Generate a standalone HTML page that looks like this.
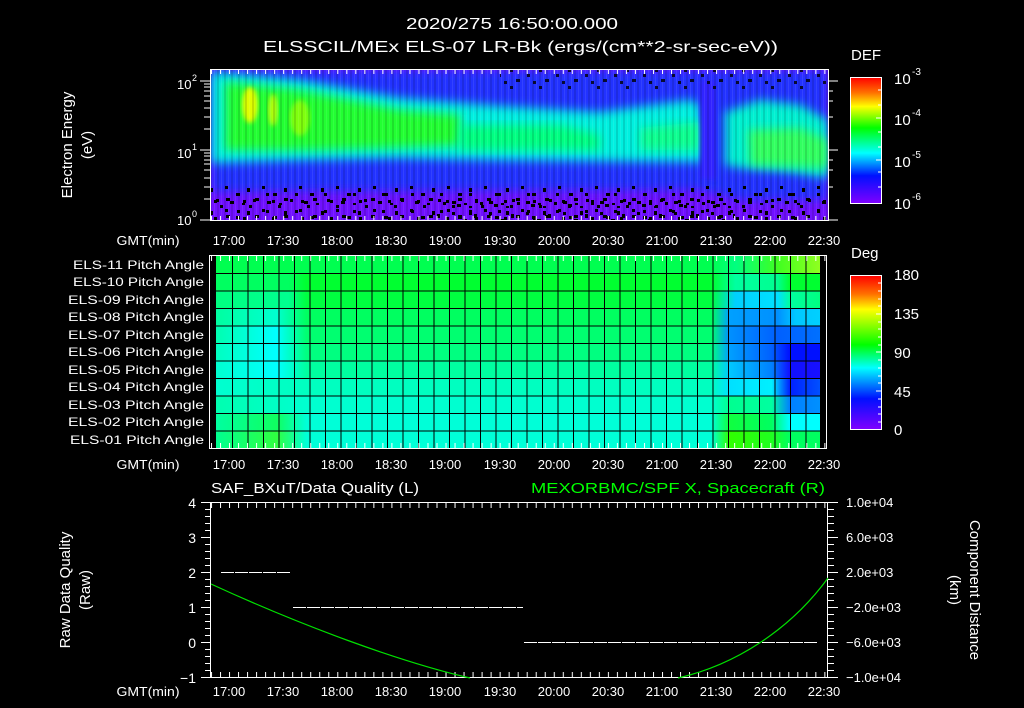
<!DOCTYPE html>
<html><head><meta charset="utf-8"><style>
html,body{margin:0;padding:0;background:#000;width:1024px;height:708px;overflow:hidden}
svg{display:block}
text{font-family:"Liberation Sans",sans-serif;fill:#fff}
</style></head><body>
<svg width="1024" height="708" viewBox="0 0 1024 708" xmlns="http://www.w3.org/2000/svg">
<defs>
<clipPath id="c1"><rect x="211" y="70" width="617" height="150"/></clipPath>
<filter id="b6" x="-20%" y="-20%" width="140%" height="140%"><feGaussianBlur stdDeviation="5"/></filter>
<filter id="b3"><feGaussianBlur stdDeviation="2.5"/></filter>
<pattern id="spk1" width="37" height="23" patternUnits="userSpaceOnUse">
<rect x="3" y="2" width="3" height="3" fill="#000"/><rect x="14" y="9" width="4" height="3" fill="#000"/><rect x="25" y="4" width="3" height="4" fill="#000"/><rect x="31" y="15" width="3" height="3" fill="#000"/><rect x="8" y="17" width="4" height="3" fill="#000"/><rect x="20" y="19" width="3" height="2" fill="#000"/>
</pattern>
<pattern id="spk2" width="29" height="17" patternUnits="userSpaceOnUse">
<rect x="5" y="6" width="3" height="3" fill="#000"/><rect x="17" y="1" width="3" height="3" fill="#000"/><rect x="23" y="11" width="4" height="3" fill="#000"/><rect x="11" y="13" width="3" height="3" fill="#000"/>
</pattern>
<pattern id="streak" width="7" height="10" patternUnits="userSpaceOnUse">
<rect x="0" y="0" width="2" height="10" fill="#000" opacity="0.12"/><rect x="4" y="0" width="1" height="10" fill="#fff" opacity="0.08"/>
</pattern>
<pattern id="tk" x="211" width="9.02" height="10" patternUnits="userSpaceOnUse"><rect x="0" y="0" width="1" height="10" fill="#fff"/></pattern>
<linearGradient id="gdef" x1="0" y1="0" x2="0" y2="1">
<stop offset="0" stop-color="#ff0000"/><stop offset="0.12" stop-color="#ff7000"/><stop offset="0.23" stop-color="#ffff00"/><stop offset="0.4" stop-color="#00ff00"/><stop offset="0.6" stop-color="#00ffff"/><stop offset="0.78" stop-color="#0010ff"/><stop offset="1" stop-color="#8000ff"/></linearGradient>
<linearGradient id="gdeg" x1="0" y1="0" x2="0" y2="1">
<stop offset="0" stop-color="#ff0000"/><stop offset="0.12" stop-color="#ff7000"/><stop offset="0.22" stop-color="#ffff00"/><stop offset="0.45" stop-color="#00ff00"/><stop offset="0.6" stop-color="#00ffff"/><stop offset="0.8" stop-color="#0010ff"/><stop offset="1" stop-color="#8000ff"/></linearGradient>
<linearGradient id="r1" gradientUnits="userSpaceOnUse" x1="216" x2="820" y1="0" y2="0"><stop offset="0" stop-color="#00ff50"/><stop offset="0.82" stop-color="#00ff50"/><stop offset="0.86" stop-color="#00ff80"/><stop offset="0.93" stop-color="#40ff20"/><stop offset="1" stop-color="#90ff20"/></linearGradient>
<linearGradient id="r2" gradientUnits="userSpaceOnUse" x1="216" x2="820" y1="0" y2="0"><stop offset="0" stop-color="#00ff60"/><stop offset="0.12" stop-color="#00ff60"/><stop offset="0.15" stop-color="#00ff30"/><stop offset="0.82" stop-color="#00ff30"/><stop offset="0.86" stop-color="#00ffa0"/><stop offset="0.93" stop-color="#00ff90"/><stop offset="0.95" stop-color="#00ff30"/><stop offset="1" stop-color="#00ff30"/></linearGradient>
<linearGradient id="r3" gradientUnits="userSpaceOnUse" x1="216" x2="820" y1="0" y2="0"><stop offset="0" stop-color="#00ff80"/><stop offset="0.12" stop-color="#00ff90"/><stop offset="0.15" stop-color="#00ff40"/><stop offset="0.82" stop-color="#00ff40"/><stop offset="0.86" stop-color="#00d0ff"/><stop offset="0.93" stop-color="#00e0ff"/><stop offset="0.95" stop-color="#00ffa0"/><stop offset="1" stop-color="#00ff80"/></linearGradient>
<linearGradient id="r4" gradientUnits="userSpaceOnUse" x1="216" x2="820" y1="0" y2="0"><stop offset="0" stop-color="#00ffa0"/><stop offset="0.1" stop-color="#00ffd0"/><stop offset="0.15" stop-color="#00ff60"/><stop offset="0.82" stop-color="#00ff60"/><stop offset="0.85" stop-color="#00a0ff"/><stop offset="0.93" stop-color="#0090ff"/><stop offset="0.96" stop-color="#00c8ff"/><stop offset="1" stop-color="#00d0ff"/></linearGradient>
<linearGradient id="r5" gradientUnits="userSpaceOnUse" x1="216" x2="820" y1="0" y2="0"><stop offset="0" stop-color="#00ffb0"/><stop offset="0.1" stop-color="#00ffff"/><stop offset="0.15" stop-color="#00ff70"/><stop offset="0.82" stop-color="#00ff70"/><stop offset="0.85" stop-color="#0090ff"/><stop offset="0.93" stop-color="#0060ff"/><stop offset="1" stop-color="#0070ff"/></linearGradient>
<linearGradient id="r6" gradientUnits="userSpaceOnUse" x1="216" x2="820" y1="0" y2="0"><stop offset="0" stop-color="#00ffc0"/><stop offset="0.1" stop-color="#00ffff"/><stop offset="0.15" stop-color="#00ff80"/><stop offset="0.82" stop-color="#00ff80"/><stop offset="0.85" stop-color="#00a0ff"/><stop offset="0.92" stop-color="#0060ff"/><stop offset="0.95" stop-color="#0010ff"/><stop offset="1" stop-color="#0010ff"/></linearGradient>
<linearGradient id="r7" gradientUnits="userSpaceOnUse" x1="216" x2="820" y1="0" y2="0"><stop offset="0" stop-color="#00ffd0"/><stop offset="0.1" stop-color="#00ffff"/><stop offset="0.15" stop-color="#00ffa0"/><stop offset="0.82" stop-color="#00ffa0"/><stop offset="0.85" stop-color="#00c8ff"/><stop offset="0.92" stop-color="#0080ff"/><stop offset="0.95" stop-color="#1010ff"/><stop offset="1" stop-color="#1810ff"/></linearGradient>
<linearGradient id="r8" gradientUnits="userSpaceOnUse" x1="216" x2="820" y1="0" y2="0"><stop offset="0" stop-color="#00ffd0"/><stop offset="0.15" stop-color="#00ffc0"/><stop offset="0.82" stop-color="#00ffc0"/><stop offset="0.85" stop-color="#00e0ff"/><stop offset="0.92" stop-color="#00f0ff"/><stop offset="0.95" stop-color="#0020ff"/><stop offset="1" stop-color="#0050ff"/></linearGradient>
<linearGradient id="r9" gradientUnits="userSpaceOnUse" x1="216" x2="820" y1="0" y2="0"><stop offset="0" stop-color="#00ffb0"/><stop offset="0.15" stop-color="#00ffd0"/><stop offset="0.82" stop-color="#00ffd0"/><stop offset="0.85" stop-color="#00ff90"/><stop offset="0.92" stop-color="#00ffa0"/><stop offset="0.95" stop-color="#0080ff"/><stop offset="1" stop-color="#0090ff"/></linearGradient>
<linearGradient id="r10" gradientUnits="userSpaceOnUse" x1="216" x2="820" y1="0" y2="0"><stop offset="0" stop-color="#00ffa0"/><stop offset="0.1" stop-color="#10ff60"/><stop offset="0.15" stop-color="#00ffd8"/><stop offset="0.82" stop-color="#00ffd8"/><stop offset="0.85" stop-color="#10ff40"/><stop offset="0.92" stop-color="#00ff60"/><stop offset="0.95" stop-color="#00ffff"/><stop offset="1" stop-color="#00ffff"/></linearGradient>
<linearGradient id="r11" gradientUnits="userSpaceOnUse" x1="216" x2="820" y1="0" y2="0"><stop offset="0" stop-color="#00ff90"/><stop offset="0.1" stop-color="#30ff40"/><stop offset="0.15" stop-color="#00ffd8"/><stop offset="0.82" stop-color="#00ffd8"/><stop offset="0.85" stop-color="#30ff00"/><stop offset="0.92" stop-color="#20ff20"/><stop offset="0.95" stop-color="#00ff60"/><stop offset="1" stop-color="#00ff60"/></linearGradient>
</defs>

<text x="512" y="29" font-size="16" text-anchor="middle" textLength="212" lengthAdjust="spacingAndGlyphs">2020/275 16:50:00.000</text>
<text x="263" y="52" font-size="16" textLength="515" lengthAdjust="spacingAndGlyphs">ELSSCIL/MEx ELS-07 LR-Bk  (ergs/(cm**2-sr-sec-eV))</text>

<g clip-path="url(#c1)">
<rect x="211" y="70" width="617" height="150" fill="#7010ff"/>
<path d="M211,70 H828 V200 H740 L720,195 L700,190 L211,192 Z" fill="#2030ff" filter="url(#b6)"/>
<path d="M211,72 L300,80 L400,98 L500,106 L600,112 L690,100 L700,105 L705,160 L700,162 L500,160 L400,158 L300,160 L211,163 Z" fill="#00f0e0" filter="url(#b6)"/>
<path d="M725,112 L760,100 L800,105 L828,120 V178 L790,172 L740,168 L725,165 Z" fill="#00f0d0" filter="url(#b6)"/>
<path d="M225,82 L300,90 L400,110 L460,115 L460,145 L380,148 L300,150 L225,150 Z" fill="#20ff30" filter="url(#b6)"/>
<path d="M460,125 L560,125 L600,135 L600,150 L460,150 Z" fill="#00ff80" filter="url(#b6)"/>
<path d="M640,128 L700,122 L700,150 L640,150 Z" fill="#10ff90" filter="url(#b6)"/>
<path d="M748,130 L800,128 L828,140 V168 L750,165 Z" fill="#30ff60" filter="url(#b6)"/>
<ellipse cx="250" cy="105" rx="8" ry="18" fill="#e0ff00" filter="url(#b3)"/>
<ellipse cx="273" cy="110" rx="5" ry="16" fill="#b0ff10" filter="url(#b3)"/>
<ellipse cx="300" cy="118" rx="10" ry="18" fill="#80ff10" filter="url(#b3)"/>
<rect x="700" y="80" width="16" height="100" fill="#3020ff" filter="url(#b3)"/>
<rect x="211" y="70" width="617" height="150" fill="url(#streak)"/>
<rect x="211" y="185" width="617" height="35" fill="url(#spk1)"/>
<rect x="211" y="192" width="617" height="28" fill="url(#spk2)"/>
<rect x="430" y="196" width="300" height="24" fill="url(#spk1)" transform="translate(5,3)"/>
<rect x="500" y="70" width="328" height="20" fill="url(#spk2)" opacity="0.8"/>
</g>
<rect x="210.5" y="69.5" width="618" height="151" fill="none" stroke="#fff"/>
<rect x="211" y="70" width="617" height="4" fill="url(#tk)"/>
<rect x="211" y="216" width="617" height="4" fill="url(#tk)"/>
<g stroke="#fff">
<line x1="200" y1="81" x2="210" y2="81"/><line x1="200" y1="150" x2="210" y2="150"/>
<line x1="204" y1="129" x2="210" y2="129"/><line x1="204" y1="117" x2="210" y2="117"/><line x1="204" y1="108" x2="210" y2="108"/><line x1="204" y1="101" x2="210" y2="101"/><line x1="204" y1="96" x2="210" y2="96"/><line x1="204" y1="91" x2="210" y2="91"/><line x1="204" y1="87" x2="210" y2="87"/><line x1="204" y1="84" x2="210" y2="84"/>
<line x1="204" y1="199" x2="210" y2="199"/><line x1="204" y1="187" x2="210" y2="187"/><line x1="204" y1="178" x2="210" y2="178"/><line x1="204" y1="170" x2="210" y2="170"/><line x1="204" y1="164" x2="210" y2="164"/><line x1="204" y1="160" x2="210" y2="160"/><line x1="204" y1="156" x2="210" y2="156"/><line x1="204" y1="153" x2="210" y2="153"/>
<line x1="200" y1="220" x2="210" y2="220"/>
<line x1="828" y1="81" x2="838" y2="81"/><line x1="828" y1="150" x2="838" y2="150"/><line x1="828" y1="220" x2="838" y2="220"/>
<line x1="828" y1="117" x2="833" y2="117"/><line x1="828" y1="101" x2="833" y2="101"/><line x1="828" y1="91" x2="833" y2="91"/><line x1="828" y1="187" x2="833" y2="187"/><line x1="828" y1="170" x2="833" y2="170"/><line x1="828" y1="160" x2="833" y2="160"/>
</g>
<text x="177" y="89" font-size="13">10</text><text x="192" y="81" font-size="9">2</text>
<text x="177" y="158" font-size="13">10</text><text x="192" y="150" font-size="9">1</text>
<text x="177" y="225" font-size="13">10</text><text x="192" y="217" font-size="9">0</text>
<text transform="translate(72,145) rotate(-90)" font-size="15" text-anchor="middle">Electron Energy</text>
<text transform="translate(92,145) rotate(-90)" font-size="15" text-anchor="middle">(eV)</text>

<g font-size="13" text-anchor="middle">
<text x="148" y="245" textLength="63" lengthAdjust="spacingAndGlyphs">GMT(min)</text>
<text x="229" y="245">17:00</text><text x="283" y="245">17:30</text><text x="337" y="245">18:00</text><text x="391" y="245">18:30</text><text x="445" y="245">19:00</text><text x="500" y="245">19:30</text><text x="554" y="245">20:00</text><text x="608" y="245">20:30</text><text x="662" y="245">21:00</text><text x="716" y="245">21:30</text><text x="770" y="245">22:00</text><text x="824" y="245">22:30</text>
</g>

<text x="851" y="60" font-size="15">DEF</text>
<rect x="850.5" y="77.5" width="31" height="126" fill="url(#gdef)" stroke="#fff"/>
<g stroke="#fff"><line x1="876" y1="118" x2="882" y2="118"/><line x1="876" y1="160" x2="882" y2="160"/><line x1="878" y1="90" x2="882" y2="90"/><line x1="878" y1="105" x2="882" y2="105"/><line x1="878" y1="132" x2="882" y2="132"/><line x1="878" y1="147" x2="882" y2="147"/><line x1="878" y1="172" x2="882" y2="172"/><line x1="878" y1="187" x2="882" y2="187"/></g>
<g font-size="15"><text x="894" y="84">10</text><text x="894" y="125">10</text><text x="894" y="167">10</text><text x="894" y="209">10</text></g>
<g font-size="10"><text x="912" y="75">-3</text><text x="912" y="116">-4</text><text x="912" y="158">-5</text><text x="912" y="200">-6</text></g>

<g>
<rect x="216" y="256" width="604" height="17.6" fill="url(#r1)"/>
<rect x="216" y="273.5" width="604" height="17.6" fill="url(#r2)"/>
<rect x="216" y="291" width="604" height="17.6" fill="url(#r3)"/>
<rect x="216" y="308.5" width="604" height="17.6" fill="url(#r4)"/>
<rect x="216" y="326" width="604" height="17.6" fill="url(#r5)"/>
<rect x="216" y="343.5" width="604" height="17.6" fill="url(#r6)"/>
<rect x="216" y="361" width="604" height="17.6" fill="url(#r7)"/>
<rect x="216" y="378.5" width="604" height="17.6" fill="url(#r8)"/>
<rect x="216" y="396" width="604" height="17.6" fill="url(#r9)"/>
<rect x="216" y="413.5" width="604" height="17.6" fill="url(#r10)"/>
<rect x="216" y="431" width="604" height="17.6" fill="url(#r11)"/>
</g>
<g stroke="#000" stroke-width="1">
<line x1="216" x2="820" y1="273.5" y2="273.5"/><line x1="216" x2="820" y1="291" y2="291"/><line x1="216" x2="820" y1="308.5" y2="308.5"/><line x1="216" x2="820" y1="326" y2="326"/><line x1="216" x2="820" y1="343.5" y2="343.5"/><line x1="216" x2="820" y1="361" y2="361"/><line x1="216" x2="820" y1="378.5" y2="378.5"/><line x1="216" x2="820" y1="396" y2="396"/><line x1="216" x2="820" y1="413.5" y2="413.5"/><line x1="216" x2="820" y1="431" y2="431"/>
</g>
<g stroke="#000">
<line x1="232.5" x2="232.5" y1="256" y2="449"/><line x1="248" x2="248" y1="256" y2="449"/><line x1="263.5" x2="263.5" y1="256" y2="449"/><line x1="279" x2="279" y1="256" y2="449"/><line x1="294.5" x2="294.5" y1="256" y2="449"/><line x1="310" x2="310" y1="256" y2="449"/><line x1="325.5" x2="325.5" y1="256" y2="449"/><line x1="341" x2="341" y1="256" y2="449"/><line x1="356.5" x2="356.5" y1="256" y2="449"/><line x1="372" x2="372" y1="256" y2="449"/><line x1="387.5" x2="387.5" y1="256" y2="449"/><line x1="403" x2="403" y1="256" y2="449"/><line x1="418.5" x2="418.5" y1="256" y2="449"/><line x1="434" x2="434" y1="256" y2="449"/><line x1="449.5" x2="449.5" y1="256" y2="449"/><line x1="465" x2="465" y1="256" y2="449"/><line x1="480.5" x2="480.5" y1="256" y2="449"/><line x1="496" x2="496" y1="256" y2="449"/><line x1="511.5" x2="511.5" y1="256" y2="449"/><line x1="527" x2="527" y1="256" y2="449"/><line x1="542.5" x2="542.5" y1="256" y2="449"/><line x1="558" x2="558" y1="256" y2="449"/><line x1="573.5" x2="573.5" y1="256" y2="449"/><line x1="589" x2="589" y1="256" y2="449"/><line x1="604.5" x2="604.5" y1="256" y2="449"/><line x1="620" x2="620" y1="256" y2="449"/><line x1="635.5" x2="635.5" y1="256" y2="449"/><line x1="651" x2="651" y1="256" y2="449"/><line x1="666.5" x2="666.5" y1="256" y2="449"/><line x1="682" x2="682" y1="256" y2="449"/><line x1="697.5" x2="697.5" y1="256" y2="449"/><line x1="713" x2="713" y1="256" y2="449"/><line x1="728.5" x2="728.5" y1="256" y2="449"/><line x1="744" x2="744" y1="256" y2="449"/><line x1="759.5" x2="759.5" y1="256" y2="449"/><line x1="775" x2="775" y1="256" y2="449"/><line x1="790.5" x2="790.5" y1="256" y2="449"/><line x1="806" x2="806" y1="256" y2="449"/>
</g>
<rect x="209.5" y="255.5" width="617" height="193" fill="none" stroke="#fff"/>
<rect x="211" y="256" width="615" height="5" fill="url(#tk)"/>
<rect x="211" y="443" width="615" height="5" fill="url(#tk)"/>
<g font-size="12" text-anchor="end">
<text x="204" y="269" textLength="131" lengthAdjust="spacingAndGlyphs">ELS-11 Pitch Angle</text><text x="204" y="286" textLength="131" lengthAdjust="spacingAndGlyphs">ELS-10 Pitch Angle</text><text x="204" y="304" textLength="136" lengthAdjust="spacingAndGlyphs">ELS-09 Pitch Angle</text><text x="204" y="321" textLength="136" lengthAdjust="spacingAndGlyphs">ELS-08 Pitch Angle</text><text x="204" y="339" textLength="136" lengthAdjust="spacingAndGlyphs">ELS-07 Pitch Angle</text><text x="204" y="356" textLength="136" lengthAdjust="spacingAndGlyphs">ELS-06 Pitch Angle</text><text x="204" y="374" textLength="136" lengthAdjust="spacingAndGlyphs">ELS-05 Pitch Angle</text><text x="204" y="391" textLength="136" lengthAdjust="spacingAndGlyphs">ELS-04 Pitch Angle</text><text x="204" y="409" textLength="136" lengthAdjust="spacingAndGlyphs">ELS-03 Pitch Angle</text><text x="204" y="426" textLength="136" lengthAdjust="spacingAndGlyphs">ELS-02 Pitch Angle</text><text x="204" y="444" textLength="134" lengthAdjust="spacingAndGlyphs">ELS-01 Pitch Angle</text>
</g>
<g font-size="13" text-anchor="middle">
<text x="148" y="469" textLength="63" lengthAdjust="spacingAndGlyphs">GMT(min)</text>
<text x="229" y="469">17:00</text><text x="283" y="469">17:30</text><text x="337" y="469">18:00</text><text x="391" y="469">18:30</text><text x="445" y="469">19:00</text><text x="500" y="469">19:30</text><text x="554" y="469">20:00</text><text x="608" y="469">20:30</text><text x="662" y="469">21:00</text><text x="716" y="469">21:30</text><text x="770" y="469">22:00</text><text x="824" y="469">22:30</text>
</g>

<text x="851" y="258" font-size="15">Deg</text>
<rect x="850.5" y="275.5" width="31" height="154" fill="url(#gdeg)" stroke="#fff"/>
<g stroke="#fff"><line x1="876" y1="314" x2="882" y2="314"/><line x1="876" y1="352" x2="882" y2="352"/><line x1="876" y1="391" x2="882" y2="391"/><line x1="878" y1="283" x2="882" y2="283"/><line x1="878" y1="291" x2="882" y2="291"/><line x1="878" y1="299" x2="882" y2="299"/><line x1="878" y1="306" x2="882" y2="306"/><line x1="878" y1="322" x2="882" y2="322"/><line x1="878" y1="329" x2="882" y2="329"/><line x1="878" y1="337" x2="882" y2="337"/><line x1="878" y1="345" x2="882" y2="345"/><line x1="878" y1="360" x2="882" y2="360"/><line x1="878" y1="368" x2="882" y2="368"/><line x1="878" y1="376" x2="882" y2="376"/><line x1="878" y1="383" x2="882" y2="383"/><line x1="878" y1="399" x2="882" y2="399"/><line x1="878" y1="407" x2="882" y2="407"/><line x1="878" y1="414" x2="882" y2="414"/><line x1="878" y1="422" x2="882" y2="422"/></g>
<g font-size="15"><text x="894" y="280">180</text><text x="894" y="319">135</text><text x="894" y="358">90</text><text x="894" y="397">45</text><text x="894" y="435">0</text></g>

<text x="211" y="493" font-size="15" textLength="208" lengthAdjust="spacingAndGlyphs">SAF_BXuT/Data Quality (L)</text>
<text x="531" y="493" font-size="15" style="fill:#00ff00" textLength="294" lengthAdjust="spacingAndGlyphs">MEXORBMC/SPF X, Spacecraft (R)</text>
<rect x="210.5" y="502.5" width="617" height="175" fill="none" stroke="#fff"/>
<rect x="211" y="503" width="617" height="5" fill="url(#tk)"/>
<rect x="211" y="672" width="617" height="5" fill="url(#tk)"/>
<g stroke="#fff">
<line x1="201" x2="211" y1="502.5" y2="502.5"/><line x1="201" x2="211" y1="537.5" y2="537.5"/><line x1="201" x2="211" y1="572.5" y2="572.5"/><line x1="201" x2="211" y1="607.5" y2="607.5"/><line x1="201" x2="211" y1="642.5" y2="642.5"/><line x1="201" x2="211" y1="677.5" y2="677.5"/>
<line x1="205" x2="211" y1="509.5" y2="509.5"/><line x1="205" x2="211" y1="516.5" y2="516.5"/><line x1="205" x2="211" y1="523.5" y2="523.5"/><line x1="205" x2="211" y1="530.5" y2="530.5"/><line x1="205" x2="211" y1="544.5" y2="544.5"/><line x1="205" x2="211" y1="551.5" y2="551.5"/><line x1="205" x2="211" y1="558.5" y2="558.5"/><line x1="205" x2="211" y1="565.5" y2="565.5"/><line x1="205" x2="211" y1="579.5" y2="579.5"/><line x1="205" x2="211" y1="586.5" y2="586.5"/><line x1="205" x2="211" y1="593.5" y2="593.5"/><line x1="205" x2="211" y1="600.5" y2="600.5"/><line x1="205" x2="211" y1="614.5" y2="614.5"/><line x1="205" x2="211" y1="621.5" y2="621.5"/><line x1="205" x2="211" y1="628.5" y2="628.5"/><line x1="205" x2="211" y1="635.5" y2="635.5"/><line x1="205" x2="211" y1="649.5" y2="649.5"/><line x1="205" x2="211" y1="656.5" y2="656.5"/><line x1="205" x2="211" y1="663.5" y2="663.5"/><line x1="205" x2="211" y1="670.5" y2="670.5"/>
<line x1="828" x2="838" y1="502.5" y2="502.5"/><line x1="828" x2="838" y1="537.5" y2="537.5"/><line x1="828" x2="838" y1="572.5" y2="572.5"/><line x1="828" x2="838" y1="607.5" y2="607.5"/><line x1="828" x2="838" y1="642.5" y2="642.5"/><line x1="828" x2="838" y1="677.5" y2="677.5"/>
<line x1="828" x2="834" y1="509.5" y2="509.5"/><line x1="828" x2="834" y1="516.5" y2="516.5"/><line x1="828" x2="834" y1="523.5" y2="523.5"/><line x1="828" x2="834" y1="530.5" y2="530.5"/><line x1="828" x2="834" y1="544.5" y2="544.5"/><line x1="828" x2="834" y1="551.5" y2="551.5"/><line x1="828" x2="834" y1="558.5" y2="558.5"/><line x1="828" x2="834" y1="565.5" y2="565.5"/><line x1="828" x2="834" y1="579.5" y2="579.5"/><line x1="828" x2="834" y1="586.5" y2="586.5"/><line x1="828" x2="834" y1="593.5" y2="593.5"/><line x1="828" x2="834" y1="600.5" y2="600.5"/><line x1="828" x2="834" y1="614.5" y2="614.5"/><line x1="828" x2="834" y1="621.5" y2="621.5"/><line x1="828" x2="834" y1="628.5" y2="628.5"/><line x1="828" x2="834" y1="635.5" y2="635.5"/><line x1="828" x2="834" y1="649.5" y2="649.5"/><line x1="828" x2="834" y1="656.5" y2="656.5"/><line x1="828" x2="834" y1="663.5" y2="663.5"/><line x1="828" x2="834" y1="670.5" y2="670.5"/>
</g>
<g stroke="#fff" stroke-dasharray="13 1">
<line x1="221" x2="290" y1="572.5" y2="572.5"/>
<line x1="293" x2="523" y1="607.5" y2="607.5"/>
<line x1="524" x2="818" y1="642.5" y2="642.5"/>
</g>
<path d="M211,584 C300,625 400,662 470,678" fill="none" stroke="#00e000" stroke-width="1.2"/>
<path d="M678,678 C735,665 790,630 828,578" fill="none" stroke="#00e000" stroke-width="1.2"/>
<g font-size="14" text-anchor="end"><text x="196" y="508">4</text><text x="196" y="543">3</text><text x="196" y="578">2</text><text x="196" y="613">1</text><text x="196" y="648">0</text><text x="196" y="683">−1</text></g>
<g font-size="13"><text x="846" y="507">1.0e+04</text><text x="846" y="542">6.0e+03</text><text x="846" y="577">2.0e+03</text><text x="846" y="612">−2.0e+03</text><text x="846" y="647">−6.0e+03</text><text x="846" y="682">−1.0e+04</text></g>
<text transform="translate(70,590) rotate(-90)" font-size="15" text-anchor="middle">Raw Data Quality</text>
<text transform="translate(90,590) rotate(-90)" font-size="15" text-anchor="middle">(Raw)</text>
<text transform="translate(970,590) rotate(90)" font-size="15" text-anchor="middle">Component Distance</text>
<text transform="translate(950,590) rotate(90)" font-size="15" text-anchor="middle">(km)</text>
<g font-size="13" text-anchor="middle">
<text x="148" y="696" textLength="63" lengthAdjust="spacingAndGlyphs">GMT(min)</text>
<text x="229" y="696">17:00</text><text x="283" y="696">17:30</text><text x="337" y="696">18:00</text><text x="391" y="696">18:30</text><text x="445" y="696">19:00</text><text x="500" y="696">19:30</text><text x="554" y="696">20:00</text><text x="608" y="696">20:30</text><text x="662" y="696">21:00</text><text x="716" y="696">21:30</text><text x="770" y="696">22:00</text><text x="824" y="696">22:30</text>
</g>
</svg>
</body></html>
